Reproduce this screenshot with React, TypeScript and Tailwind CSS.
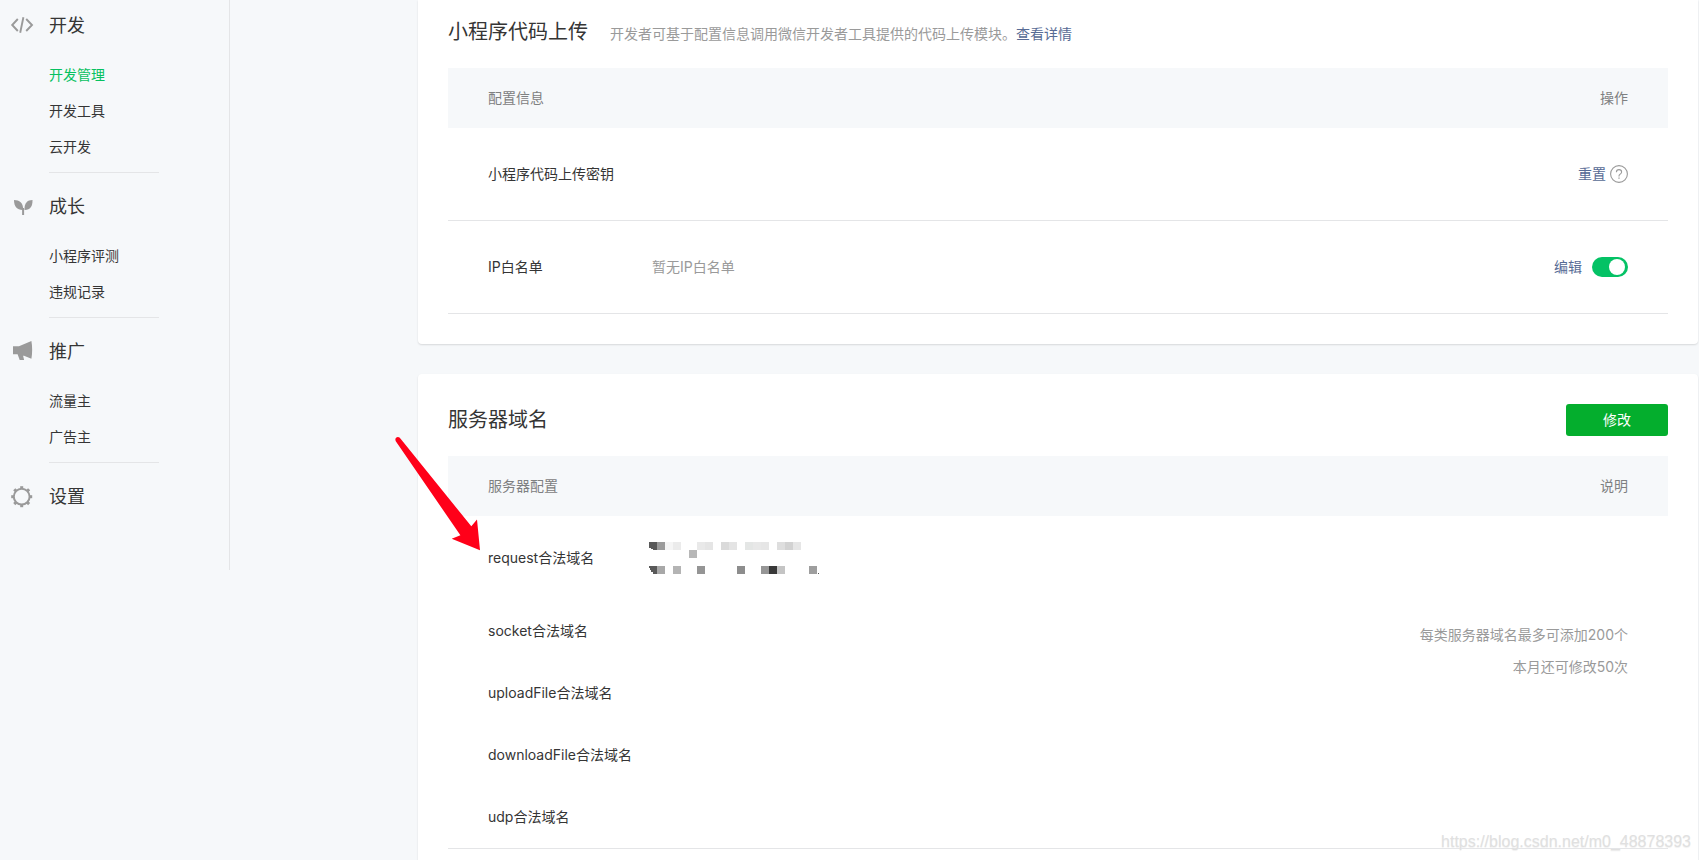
import type { ReactNode } from "react";

const CodeIcon = () => (
  <svg viewBox="0 0 24 24" className="size-6" fill="none" stroke="#9a9a9a" strokeWidth="1.9" aria-hidden="true">
    <path d="M7.8 5 2.2 11l5.6 6M16.2 5l5.8 6-5.8 6M13.4 3.2 10.2 18.8" />
  </svg>
);

const SproutIcon = () => (
  <svg viewBox="0 0 24 24" className="size-6" fill="#9a9a9a" aria-hidden="true">
    <path d="M4 5c5.5.1 9.2 2.6 9.2 9.9C7.4 15.2 4 12 4 5Z" />
    <path d="M22.5 5c-5.3 0-8.2 3.200-8 9.900 5.600.2 8.200-3.400 8-9.900Z" />
    <path d="M12.1 13h2v7h-2z" />
  </svg>
);

const HornIcon = () => (
  <svg viewBox="0 0 24 24" className="size-6" fill="#9a9a9a" aria-hidden="true">
    <path d="M3 6.300h6L21.400 1c1 5.500 1 12.500 0 17.800L14 15.800h-.9l1 4.200H9.700L7.600 14.300H3Z" />
  </svg>
);

const teeth = [0, 45, 90, 135, 180, 225, 270, 315];

const GearIcon = () => (
  <svg viewBox="0 0 24 24" className="size-6" fill="#9a9a9a" aria-hidden="true">
    <circle cx="11.7" cy="11.7" r="7.9" fill="none" stroke="#9a9a9a" strokeWidth="2" />
    {teeth.map((angle) => (
      <path key={angle} d="M10.200 1.200h3v2.600h-3z" transform={`rotate(${angle} 11.7 11.7)`} />
    ))}
  </svg>
);

interface NavSection {
  title: string;
  icon: ReactNode;
  items: string[];
}

const sections: NavSection[] = [
  { title: "开发", icon: <CodeIcon />, items: ["开发管理", "开发工具", "云开发"] },
  { title: "成长", icon: <SproutIcon />, items: ["小程序评测", "违规记录"] },
  { title: "推广", icon: <HornIcon />, items: ["流量主", "广告主"] },
  { title: "设置", icon: <GearIcon />, items: [] },
];

function Sidebar() {
  return (
    <nav className="h-[570px] w-[230px] shrink-0 border-r border-[#e4e5e7]">
      <div className="-mt-2">
        {sections.map((section) => (
          <section key={section.title} className="pt-2.5">
            <h2 className="flex h-12 items-center gap-[15px] pl-2.5 text-lg">
              {section.icon}
              {section.title}
            </h2>
            {section.items.length > 0 && (
              <ul className="ml-[49px] w-[110px] border-b border-[#e4e5e7] py-[7px]">
                {section.items.map((item) => (
                  <li key={item}>
                    <a
                      href="#"
                      className={
                        item === "开发管理"
                          ? "flex h-9 items-center text-[#07c160]"
                          : "flex h-9 items-center"
                      }
                    >
                      {item}
                    </a>
                  </li>
                ))}
              </ul>
            )}
          </section>
        ))}
      </div>
    </nav>
  );
}

const HelpIcon = () => (
  <svg viewBox="0 0 18 18" className="size-[18px]" fill="none" stroke="#9a9a9a" strokeWidth="1.1" aria-hidden="true">
    <circle cx="9" cy="9" r="8.4" />
    <path d="M6.400 7.200C6.400 5.500 7.500 4.600 9 4.600s2.600.9 2.600 2.300c0 1.100-.6 1.600-1.400 2.200-.8.6-1.200 1-1.200 1.900v.4" />
    <path d="M9 12.500v1.300" strokeWidth="1.3" />
  </svg>
);

function UploadCard() {
  return (
    <section className="rounded-b bg-white px-[30px] pt-4 pb-[30px] shadow-[0_1px_2px_rgba(0,0,0,0.13)]">
      <header className="mb-5 flex h-8 items-center gap-[22px]">
        <h2 className="text-xl">小程序代码上传</h2>
        <p className="pt-1 text-[#9a9a9a]">
          开发者可基于配置信息调用微信开发者工具提供的代码上传模块。
          <a href="#" className="text-[#576b95]">查看详情</a>
        </p>
      </header>
      <table className="w-full border-separate border-spacing-0 text-left">
        <thead>
          <tr className="h-[60px] bg-[#f6f8fa] text-[#7e8081]">
            <th colSpan={2} className="pl-10 font-normal">配置信息</th>
            <th className="pr-10 text-right font-normal">操作</th>
          </tr>
        </thead>
        <tbody>
          <tr className="h-[93px]">
            <td className="w-[204px] border-b border-[#e4e5e7] pl-10">小程序代码上传密钥</td>
            <td className="border-b border-[#e4e5e7]" />
            <td className="border-b border-[#e4e5e7] pr-10">
              <div className="flex items-center justify-end gap-1">
                <a href="#" className="text-[#576b95]">重置</a>
                <button type="button" aria-label="帮助"><HelpIcon /></button>
              </div>
            </td>
          </tr>
          <tr className="h-[93px]">
            <td className="border-b border-[#e4e5e7] pl-10">
              <label htmlFor="whitelist">IP白名单</label>
            </td>
            <td className="border-b border-[#e4e5e7] text-[#9a9a9a]">暂无IP白名单</td>
            <td className="border-b border-[#e4e5e7] pr-10">
              <div className="flex items-center justify-end gap-2.5">
                <a href="#" className="text-[#576b95]">编辑</a>
                <input
                  id="whitelist"
                  type="checkbox"
                  role="switch"
                  defaultChecked
                  className="flex h-5 w-9 appearance-none items-center rounded-full bg-[#c8c8c8] px-[3px] before:size-4 before:rounded-full before:bg-white checked:justify-end checked:bg-[#04c265]"
                />
              </div>
            </td>
          </tr>
        </tbody>
      </table>
    </section>
  );
}

/* Obscured value, drawn as [column, row, colour] on an 8px grid. */
const cells: [number, number, string][] = [
  [0, 0, "#595959"], [1, 0, "#9b9b9b"], [2, 0, "#f5f5f5"], [3, 0, "#ebebeb"],
  [6, 0, "#e9e9e9"], [7, 0, "#e5e5e5"], [9, 0, "#dadada"], [10, 0, "#e4e4e4"],
  [12, 0, "#e4e6e5"], [13, 0, "#e8e8e8"], [14, 0, "#e6e6e6"], [16, 0, "#dedede"],
  [17, 0, "#d2d2d2"], [18, 0, "#e6e6e6"], [5, 1, "#b7b7b7"],
  [0, 3, "#595959"], [1, 3, "#a8a8a8"], [3, 3, "#b4b4b4"], [6, 3, "#959595"],
  [11, 3, "#8d8d8d"], [14, 3, "#969696"], [15, 3, "#383838"], [16, 3, "#c4c4c4"],
  [20, 3, "#9e9e9e"],
];

const MaskedValue = () => (
  <svg viewBox="0 0 172 32" className="-ml-[3px] h-8 w-[172px]" role="img" aria-label="已隐藏">
    {cells.map(([column, row, colour]) => (
      <rect key={`${column}-${row}`} x={column * 8} y={row * 8} width="8" height="8" fill={colour} />
    ))}
    <path d="M0 6h2v1h2v1H0zM0 26h1v2h1v2h2v2H0z" fill="#fff" />
    <path d="M169 31h1v1h-1z" fill="#555" />
  </svg>
);

const Arrow = () => (
  <svg viewBox="0 0 88 117" className="pointer-events-none absolute top-[61px] -left-6 h-[117px] w-[88px]" aria-hidden="true">
    <path
      fill="#ff0019"
      d="M1.8 6.200C.6 3.600 2 1.900 3.900 1.900c1.300 0 2.100.8 2.900 2L77.300 91.300l5.700-6.700 3 30.700-28.300-11.600 8.700-3.400Z"
    />
  </svg>
);

const otherDomains = ["socket合法域名", "uploadFile合法域名", "downloadFile合法域名"];

function DomainCard() {
  return (
    <section className="relative rounded bg-white p-[30px] shadow-[0_1px_2px_rgba(0,0,0,0.13)]">
      <header className="mb-5 flex h-8 items-center justify-between">
        <h2 className="text-xl">服务器域名</h2>
        <button type="button" className="h-8 w-[102px] rounded-[3px] bg-[#04ae2d] text-white">修改</button>
      </header>
      <table className="w-full border-separate border-spacing-0 text-left">
        <thead>
          <tr className="h-[60px] bg-[#f6f8fa] text-[#7e8081]">
            <th colSpan={2} className="pl-10 font-normal">服务器配置</th>
            <th className="pr-10 text-right font-normal">说明</th>
          </tr>
        </thead>
        <tbody>
          <tr className="h-[84px]">
            <td className="w-[204px] pl-10">request合法域名</td>
            <td><MaskedValue /></td>
            <td rowSpan={4} className="pr-10 text-right leading-8 text-[#9a9a9a]">
              <p>每类服务器域名最多可添加200个</p>
              <p>本月还可修改50次</p>
            </td>
          </tr>
          {otherDomains.map((name) => (
            <tr key={name} className="h-[62px]">
              <td className="pl-10">{name}</td>
              <td />
            </tr>
          ))}
          <tr className="h-[63px]">
            <td className="border-b border-[#e4e5e7] pl-10">udp合法域名</td>
            <td className="border-b border-[#e4e5e7]" />
            <td className="border-b border-[#e4e5e7]" />
          </tr>
        </tbody>
      </table>
      <Arrow />
    </section>
  );
}

export default function App() {
  return (
    <div className="relative flex h-screen items-start overflow-hidden bg-[#f6f8fa] font-[Inter,'Noto_Sans_CJK_SC',sans-serif] text-sm text-[#353535]">
      <Sidebar />
      <main className="mr-px ml-[188px] flex min-w-0 flex-1 flex-col gap-[30px]">
        <UploadCard />
        <DomainCard />
      </main>
      <p className="absolute right-2 bottom-1.5 font-['Liberation_Sans',sans-serif] text-base text-[#e0e0e0] [text-shadow:0_1px_1px_#f0f0f0]">
        https://blog.csdn.net/m0_48878393
      </p>
    </div>
  );
}
